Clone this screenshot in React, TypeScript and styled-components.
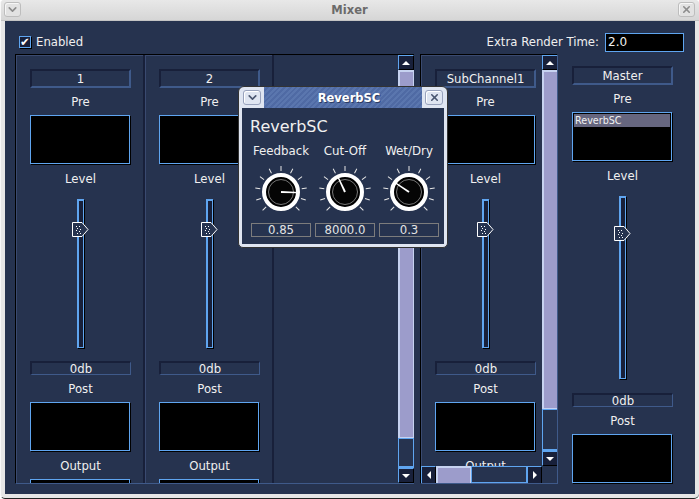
import React from "react";
import styled, { createGlobalStyle } from "styled-components";
import { ChevronDown, X } from "lucide-react";

const navy = "#26334f";
const blue = "#5fa5f0";
const bevelLight = "#3f5a8a";
const bevelDark = "#18203a";

const GlobalStyle = createGlobalStyle`
  html, body {
    margin: 0;
    padding: 0;
    background: #ffffff;
  }
  * {
    box-sizing: border-box;
  }
`;

const Root = styled.div`
  position: relative;
  width: 699px;
  height: 499px;
  display: flex;
  flex-direction: column;
  background: #e6e6e6;
  border-left: 1px solid #f8f8f8;
  border-bottom: 1px solid #222222;
  border-radius: 4px 4px 5px 5px;
  overflow: hidden;
  font-family: "DejaVu Sans", sans-serif;
  font-size: 11.7px;
  color: #f0f0f0;
`;

const TitleBar = styled.header`
  height: 21px;
  flex: none;
  display: flex;
  align-items: center;
  justify-content: space-between;
  padding: 1px 4px 2px 3px;
  background: linear-gradient(#e8e8e8, #d6d6d6);
  border-bottom: 1px solid #c4c4c4;
`;

const TitleText = styled.span`
  font-size: 11.5px;
  font-weight: bold;
  color: #6b6b6b;
`;

const WindowButton = styled.span`
  width: 17px;
  height: 15px;
  display: flex;
  align-items: center;
  justify-content: center;
  background: #e2e2e2;
  border: 1px solid #bdbdbd;
  border-radius: 3px;
  box-shadow: inset 1px 1px 0 #f6f6f6;
  color: #8c8c8c;
`;

const Body = styled.main`
  flex: 1;
  margin: 0 4px 4px 4px;
  padding: 11px 11px 0 10px;
  background: ${navy};
`;

const TopRow = styled.div`
  height: 20px;
  margin-bottom: 2px;
  padding-left: 4px;
  display: flex;
  align-items: center;
  justify-content: space-between;
`;

const CheckLabel = styled.label`
  display: flex;
  align-items: center;
  gap: 5px;
`;

const CheckBox = styled.span`
  width: 12px;
  height: 12px;
  display: flex;
  align-items: center;
  justify-content: center;
  background: ${bevelDark};
  border: 1px solid ${blue};
  box-shadow: 1px 1px 0 #000000;
  color: #ffffff;
`;

const RenderTime = styled.div`
  display: flex;
  align-items: center;
  gap: 6px;
`;

const TimeInput = styled.input`
  width: 79px;
  height: 19px;
  padding: 0 2px;
  background: #000000;
  border: 1px solid ${blue};
  color: #f0f0f0;
  font-family: "DejaVu Sans", sans-serif;
  font-size: 12px;
  outline: none;
`;

const MainRow = styled.div`
  display: flex;
  align-items: flex-start;
`;

const StripPane = styled.section`
  width: 399px;
  height: 430px;
  display: flex;
  overflow: hidden;
  border-top: 1px solid #000000;
  border-left: 1px solid #000000;
  border-bottom: 1px solid ${bevelLight};
`;

const SubPane = styled.section`
  width: 138px;
  height: 430px;
  margin-left: 6px;
  display: grid;
  grid-template-columns: 121px 16px;
  grid-template-rows: 411px 18px;
  overflow: hidden;
  border-right: 1px solid ${bevelLight};
  border-bottom: 1px solid ${bevelLight};
  border-top: 1px solid #000000;
  border-left: 1px solid #000000;
`;

const Viewport = styled.div`
  flex: 1;
  display: flex;
  overflow: hidden;
`;

const Corner = styled.div`
  background: ${navy};
`;

const Strip = styled.div<{ $width: number; $top: number; $divided?: boolean }>`
  flex: none;
  width: ${({ $width }) => $width}px;
  height: ${({ $divided }) => ($divided ? "429px" : "100%")};
  padding: ${({ $top }) => $top}px 0 0 14px;
  overflow: hidden;
  box-shadow: inset 1px 1px 0 #3a4a70;
  border-right: ${({ $divided }) => ($divided ? `2px solid ${bevelDark}` : "none")};
`;

const StripColumn = styled.div`
  width: 101px;
  display: flex;
  flex-direction: column;
  align-items: stretch;
`;

const NameBox = styled.div`
  height: 19px;
  display: flex;
  align-items: center;
  justify-content: center;
  border: 2px solid;
  border-color: ${bevelDark} ${bevelLight} ${bevelLight} ${bevelDark};
  white-space: nowrap;
`;

const DbBox = styled(NameBox)`
  height: 14px;
  border-width: 2px 1px 1px 2px;
`;

const Caption = styled.div<{ $before?: number; $after?: number }>`
  height: 14px;
  margin: ${({ $before }) => $before ?? 7}px 0 ${({ $after }) => $after ?? 6}px;
  line-height: 14px;
  text-align: center;
  white-space: nowrap;
`;

const ListBox = styled.div`
  width: 100px;
  height: 49px;
  flex: none;
  padding: 1px;
  background: #000000;
  border: 1px solid ${blue};
  box-shadow: 1px 1px 0 #000000;
  font-size: 9.6px;
`;

const ListRow = styled.div`
  height: 13px;
  padding-left: 1px;
  background: #66667f;
  line-height: 13px;
`;

const SliderArea = styled.div<{ $height: number; $after: number }>`
  position: relative;
  height: ${({ $height }) => $height}px;
  margin-bottom: ${({ $after }) => $after}px;
  padding-right: 1px;
  display: flex;
  justify-content: center;
`;

const SliderTrack = styled.div`
  width: 7px;
  height: 100%;
  background: ${bevelDark};
  border: 1px solid ${blue};
  border-left-width: 2px;
  border-top-width: 2px;
  box-shadow: 1px 1px 0 #000000;
`;

const ThumbIcon = styled.svg<{ $top: number }>`
  position: absolute;
  left: 42px;
  top: ${({ $top }) => $top}px;
`;

const ScrollV = styled.div`
  width: 16px;
  height: 100%;
  flex: none;
  display: flex;
  flex-direction: column;
  background: ${navy};
`;

const ScrollH = styled.div`
  display: flex;
  height: 18px;
  background: ${navy};
`;

const ArrowButton = styled.div<{ $dir: "up" | "down" | "left" | "right" }>`
  flex: none;
  width: ${({ $dir }) => ($dir === "left" || $dir === "right" ? "15px" : "16px")};
  height: ${({ $dir }) => ($dir === "left" || $dir === "right" ? "100%" : "15px")};
  display: flex;
  align-items: center;
  justify-content: center;
  background: ${bevelDark};
  border-top: 1px solid ${blue};
  border-left: 1px solid ${blue};
  border-right: 1px solid #000000;
  border-bottom: 1px solid #000000;

  &::after {
    content: "";
    border-style: solid;
    border-color: transparent;
    border-width: ${({ $dir }) =>
      $dir === "up"
        ? "0 4px 4px 4px"
        : $dir === "down"
          ? "4px 4px 0 4px"
          : $dir === "left"
            ? "4px 4px 4px 0"
            : "4px 0 4px 4px"};
    ${({ $dir }) =>
      $dir === "up"
        ? "border-bottom-color: #fff;"
        : $dir === "down"
          ? "border-top-color: #fff;"
          : $dir === "left"
            ? "border-right-color: #fff;"
            : "border-left-color: #fff;"}
  }
`;

const ScrollThumb = styled.div<{ $size: number; $horizontal?: boolean }>`
  flex: none;
  ${({ $horizontal, $size }) => ($horizontal ? `width: ${$size}px;` : `height: ${$size}px;`)}
  background: #9c9ccb;
  border-top: 2px solid #c6d2f0;
  border-left: 2px solid #c6d2f0;
  border-right: 1px solid #c6d2f0;
  border-bottom: 1px solid #c6d2f0;
`;

const ScrollRest = styled.div`
  flex: 1;
  border: 1px solid ${blue};
  border-bottom-width: 2px;
`;

const MasterStrip = styled.section`
  padding: 12px 0 0 14px;
  width: 115px;
`;

const Dialog = styled.aside`
  position: absolute;
  left: 237px;
  top: 86px;
  width: 210px;
  height: 162px;
  display: flex;
  flex-direction: column;
  background: #dfe5f1;
  border: 1px solid #333333;
  border-radius: 6px 6px 5px 5px;
  padding: 0 3px 3px 3px;
`;

const DialogBar = styled.div`
  height: 21px;
  flex: none;
  display: flex;
  align-items: center;
  justify-content: space-between;
`;

const DialogButton = styled.span`
  width: 18px;
  height: 15px;
  margin: 0 1px;
  display: flex;
  align-items: center;
  justify-content: center;
  background: #dfe5f1;
  border: 1px solid #98a2bc;
  border-radius: 3px;
  box-shadow: inset 1px 1px 0 #ffffff;
  color: #4a5670;
`;

const DialogTitle = styled.div`
  flex: 1;
  height: 21px;
  margin: 0 2px;
  padding-left: 12px;
  display: flex;
  align-items: center;
  justify-content: center;
  background: repeating-linear-gradient(135deg, #5a76ae 0 2px, #4f6aa4 2px 4px);
  color: #ffffff;
  font-size: 11.5px;
  font-weight: bold;
  text-shadow: 1px 1px 0 #2c3c64;
`;

const DialogPanel = styled.div`
  flex: 1;
  padding: 9px 9px 0;
  background: ${navy};
`;

const EffectName = styled.div`
  height: 20px;
  margin: 0 0 7px -1px;
  font-size: 16px;
  line-height: 20px;
`;

const KnobGrid = styled.div`
  display: grid;
  grid-template-columns: repeat(3, 60px);
  gap: 4px;
`;

const KnobCell = styled.div`
  display: flex;
  flex-direction: column;
  align-items: center;
`;

const KnobLabel = styled.div`
  height: 14px;
  margin-bottom: 6px;
  font-size: 11.8px;
  line-height: 14px;
  white-space: nowrap;
`;

const KnobValue = styled.div`
  width: 60px;
  height: 14px;
  margin-top: 3px;
  border: 1px solid #7c7c7c;
  line-height: 12px;
  text-align: center;
  color: #e4e4e4;
`;

const Thumb = ({ top }: { top: number }) => (
  <ThumbIcon $top={top} width="17" height="15" viewBox="0 0 17 15">
    <polygon points="0.5,0.5 10,0.5 16,7.5 10,14.5 0.5,14.5" fill={navy} stroke="#ffffff" />
    {[[4, 4], [7, 4], [5, 6], [8, 7], [4, 8], [7, 9], [5, 11], [8, 11]].map(([x, y]) => (
      <rect key={`${x}-${y}`} x={x} y={y} width="1" height="1" fill="#ffffff" />
    ))}
  </ThumbIcon>
);

const ChannelBody = ({ name, sliderHeight = 149, thumbTop = 23, sliderAfter = 13, list, master }: {
  name: string;
  sliderHeight?: number;
  thumbTop?: number;
  sliderAfter?: number;
  list?: string;
  master?: boolean;
}) => (
  <StripColumn>
    <NameBox>{name}</NameBox>
    <Caption>Pre</Caption>
    <ListBox>{list && <ListRow>{list}</ListRow>}</ListBox>
    <Caption $before={8} $after={13}>Level</Caption>
    <SliderArea $height={sliderHeight} $after={sliderAfter}>
      <SliderTrack />
      <Thumb top={thumbTop} />
    </SliderArea>
    <DbBox>0db</DbBox>
    <Caption>Post</Caption>
    <ListBox />
    {!master && (
      <>
        <Caption $before={8}>Output</Caption>
        <ListBox />
      </>
    )}
  </StripColumn>
);

const Knob = ({ id, angle }: { id: string; angle: number }) => {
  const ticks = Array.from({ length: 11 }, (_, i) => -135 + i * 27);
  return (
    <svg width="60" height="56" viewBox="-30 -28 60 56">
      <defs>
        <linearGradient id={id} x1="0" y1="0" x2="0" y2="-1" gradientUnits="objectBoundingBox">
          <stop offset="0" stopColor="#ffffff" />
          <stop offset="1" stopColor="#8a8a8a" />
        </linearGradient>
      </defs>
      {ticks.map((t) => (
        <line key={t} x1="0" y1="-21" x2="0" y2="-26" stroke="#e8e8e8" strokeWidth="1" transform={`rotate(${t})`} />
      ))}
      <circle r="17" fill="#000000" stroke="#ffffff" strokeWidth="4" />
      <circle r="12.5" fill="#050505" stroke="#777777" strokeWidth="1" />
      <polygon points="-1,0 1,0 0.6,-18 -0.6,-18" fill={`url(#${id})`} transform={`rotate(${angle})`} />
    </svg>
  );
};

const knobs = [
  { label: "Feedback", value: "0.85", angle: 92 },
  { label: "Cut-Off", value: "8000.0", angle: -25 },
  { label: "Wet/Dry", value: "0.3", angle: -56 },
];

const App = () => (
  <Root>
    <GlobalStyle />
    <TitleBar>
      <WindowButton><ChevronDown size={13} strokeWidth={3} /></WindowButton>
      <TitleText>Mixer</TitleText>
      <WindowButton><X size={11} strokeWidth={3.5} /></WindowButton>
    </TitleBar>
    <Body>
      <TopRow>
        <CheckLabel>
          <CheckBox>✔</CheckBox>
          Enabled
        </CheckLabel>
        <RenderTime>
          Extra Render Time:
          <TimeInput readOnly value="2.0" />
        </RenderTime>
      </TopRow>
      <MainRow>
        <StripPane>
          <Viewport>
            <Strip $width={129} $top={14} $divided>
              <ChannelBody name="1" />
            </Strip>
            <Strip $width={129} $top={14} $divided>
              <ChannelBody name="2" />
            </Strip>
          </Viewport>
          <ScrollV>
            <ArrowButton $dir="up" />
            <ScrollThumb $size={368} />
            <ScrollRest />
            <ArrowButton $dir="down" />
          </ScrollV>
        </StripPane>
        <SubPane>
          <Strip $width={121} $top={14}>
            <ChannelBody name="SubChannel1" />
          </Strip>
          <ScrollV>
            <ArrowButton $dir="up" />
            <ScrollThumb $size={339} />
            <ScrollRest />
            <ArrowButton $dir="down" />
          </ScrollV>
          <ScrollH>
            <ArrowButton $dir="left" />
            <ScrollThumb $horizontal $size={35} />
            <ScrollRest />
            <ArrowButton $dir="right" />
          </ScrollH>
          <Corner />
        </SubPane>
        <MasterStrip>
          <ChannelBody name="Master" sliderHeight={183} thumbTop={30} sliderAfter={14} list="ReverbSC" master />
        </MasterStrip>
      </MainRow>
    </Body>
    <Dialog>
      <DialogBar>
        <DialogButton><ChevronDown size={13} strokeWidth={3} /></DialogButton>
        <DialogTitle>ReverbSC</DialogTitle>
        <DialogButton><X size={11} strokeWidth={3.5} /></DialogButton>
      </DialogBar>
      <DialogPanel>
        <EffectName>ReverbSC</EffectName>
        <KnobGrid>
          {knobs.map((k, i) => (
            <KnobCell key={k.label}>
              <KnobLabel>{k.label}</KnobLabel>
              <Knob id={`needle${i}`} angle={k.angle} />
              <KnobValue>{k.value}</KnobValue>
            </KnobCell>
          ))}
        </KnobGrid>
      </DialogPanel>
    </Dialog>
  </Root>
);

export default App;
